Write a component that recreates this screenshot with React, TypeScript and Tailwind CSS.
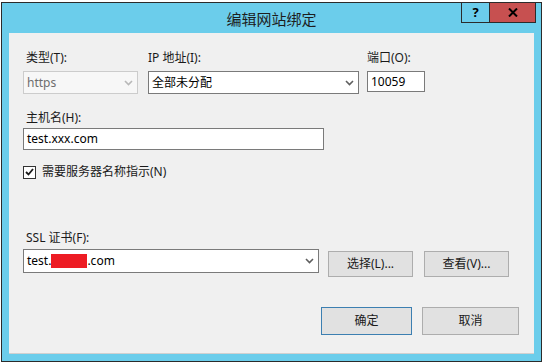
const font = "font-['Noto_Sans','Noto_Sans_CJK_SC',sans-serif]";

function Chevron({ color = "#5f5f5f" }: { color?: string }) {
  return (
    <svg width="9" height="6" viewBox="0 0 9 6" className="shrink-0">
      <path d="M1 1 L4.5 4.5 L8 1" fill="none" stroke={color} strokeWidth="1.6" />
    </svg>
  );
}

function Label({ children, className = "" }: { children: React.ReactNode; className?: string }) {
  return <div className={`text-[12px] leading-[16px] text-[#1a1a1a] ${className}`}>{children}</div>;
}

function Button({ children, primary, className = "" }: { children: React.ReactNode; primary?: boolean; className?: string }) {
  return (
    <div
      className={`flex items-center justify-center bg-[#e1e1e1] border text-[12px] text-[#1a1a1a] ${
        primary ? "border-[#3c7fb1]" : "border-[#adadad]"
      } ${className}`}
    >
      {children}
    </div>
  );
}

export default function App() {
  return (
    <div className={`w-[545px] h-[362px] bg-white overflow-hidden ${font}`}>
      <div className="ml-[1px] mt-[2px] w-[541px] h-[360px] border border-[#2b2b2b] bg-[#6bcdeb] flex flex-col">
        {/* title bar */}
        <div className="relative h-[30px] shrink-0 flex items-center justify-center">
          <span className="text-[15px] text-[#1e1e1e] mt-[2px]">编辑网站绑定</span>
          <div className="absolute top-[-1px] right-[5px] flex h-[21px]">
            <div className="w-[28px] h-full border border-[#2b2b2b] border-r-0 flex items-center justify-center text-[13px] font-bold text-black">
              ?
            </div>
            <div className="w-[47px] h-full bg-[#c75050] border border-[#2b2b2b] flex items-center justify-center">
              <svg width="10" height="9" viewBox="0 0 10 9">
                <path d="M1 0.5 L9 8.5 M9 0.5 L1 8.5" stroke="#000" strokeWidth="2" />
              </svg>
            </div>
          </div>
        </div>

        {/* content */}
        <div className="mx-[7px] mb-[7px] flex-1 bg-[#f0f0f0] border-b border-[#d0d0d0] pl-[14px] pt-[17px]">
          {/* row 1 */}
          <div className="flex items-start">
            <div className="w-[115px]">
              <Label className="pl-[3px]">类型(T):</Label>
              <div className="mt-[5px] h-[23px] border border-[#cccccc] bg-[#f7f7f7] flex items-center justify-between pl-[3px] pr-[4px] text-[12px] text-[#6d6d6d]">
                https
                <Chevron color="#b8b8b8" />
              </div>
            </div>
            <div className="ml-[10px] w-[211px]">
              <Label>IP 地址(I):</Label>
              <div className="mt-[5px] h-[23px] border border-[#7a7a7a] bg-white flex items-center justify-between pl-[3px] pr-[4px] text-[12px] text-black">
                全部未分配
                <Chevron />
              </div>
            </div>
            <div className="ml-[8px] w-[58px]">
              <Label>端口(O):</Label>
              <div className="mt-[5px] h-[21px] border border-[#7a7a7a] bg-white flex items-center pl-[3px] text-[12px] text-black">
                10059
              </div>
            </div>
          </div>

          {/* host name */}
          <Label className="mt-[16px] pl-[3px]">主机名(H):</Label>
          <div className="mt-[2px] w-[301px] h-[22px] border border-[#7a7a7a] bg-white flex items-center pl-[3px] text-[12px] text-black">
            test.xxx.com
          </div>

          {/* checkbox */}
          <div className="mt-[13px] flex items-center">
            <div className="w-[13px] h-[13px] border border-[#333] bg-white flex items-center justify-center">
              <svg width="9" height="8" viewBox="0 0 9 8">
                <path d="M1 4 L3.5 6.5 L8 1" fill="none" stroke="#1a1a1a" strokeWidth="1.8" />
              </svg>
            </div>
            <span className="ml-[6px] text-[12px] text-[#1a1a1a]">需要服务器名称指示(N)</span>
          </div>

          {/* SSL */}
          <Label className="mt-[49px] pl-[3px]">SSL 证书(F):</Label>
          <div className="flex items-start mt-[3px]">
            <div className="w-[296px] h-[24px] border border-[#7a7a7a] bg-white flex items-center justify-between pl-[3px] pr-[4px] text-[12px] text-black">
              <span className="flex items-center">
                test.
                <span className="inline-block w-[36px] h-[14px] bg-[#ed1c24]" />
                .com
              </span>
              <Chevron />
            </div>
            <Button className="ml-[9px] mt-[2px] w-[85px] h-[26px]">选择(L)...</Button>
            <Button className="ml-[11px] mt-[2px] w-[85px] h-[26px]">查看(V)...</Button>
          </div>

          {/* OK / Cancel */}
          <div className="flex mt-[30px] pl-[298px]">
            <Button primary className="w-[91px] h-[28px]">确定</Button>
            <Button className="ml-[10px] w-[97px] h-[28px]">取消</Button>
          </div>
        </div>
      </div>
    </div>
  );
}
